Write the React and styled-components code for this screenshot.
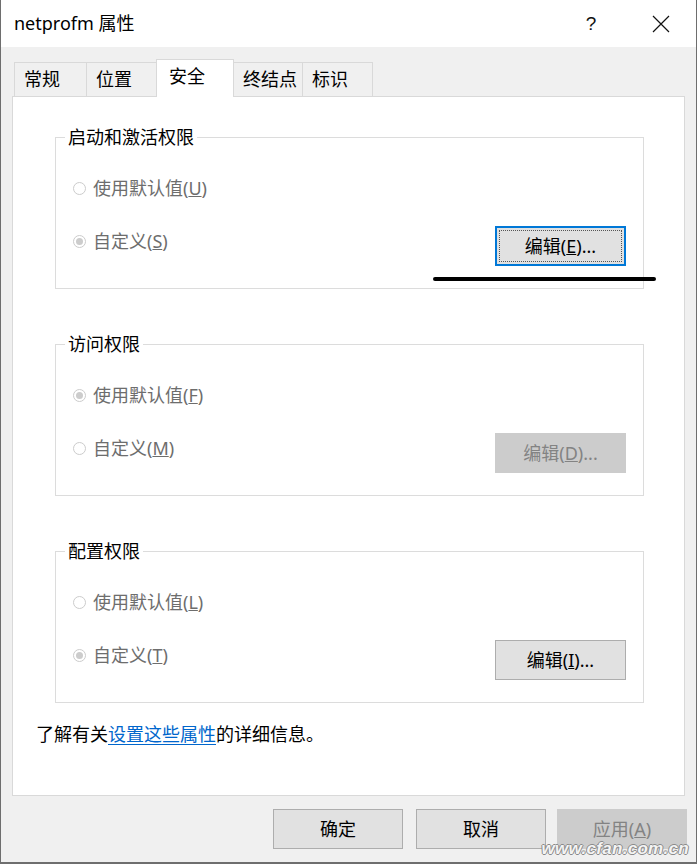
import React from 'react'
import styled, { createGlobalStyle } from 'styled-components'

const GlobalStyle = createGlobalStyle`
    html, body {
        margin: 0;
        padding: 0;
        background: #f0f0f0;
    }
    body {
        font-family: "Noto Sans", "Noto Sans CJK SC", sans-serif;
        font-size: 18px;
        color: #000;
    }
`

const Window = styled.div`
    position: relative;
    width: 697px;
    height: 864px;
    box-sizing: border-box;
    border-left: 1px solid #6e6e6e;
    border-right: 1px solid #6e6e6e;
    border-bottom: 2px solid #6e6e6e;
    background: #f0f0f0;
    display: flex;
    flex-direction: column;
    overflow: hidden;
`

const TitleBar = styled.div`
    height: 47px;
    flex-shrink: 0;
    background: #fff;
    display: flex;
    align-items: center;
    padding-left: 13px;
`
const Title = styled.div`
    flex: 1;
    font-size: 18px;
    line-height: 24px;
    margin-top: -1px;
`
const TitleButton = styled.div`
    width: 46px;
    height: 47px;
    display: flex;
    align-items: center;
    justify-content: center;
    font-size: 19px;
    color: #111;
`
const HelpButton = styled(TitleButton)`
    margin-right: 24px;
    font-family: "Liberation Sans", sans-serif;
    font-weight: 300;
`
const CloseButton = styled(TitleButton)`
    margin-right: 12px;
`

const Body = styled.div`
    flex: 1;
    display: flex;
    flex-direction: column;
    padding-top: 12px;
`

const TabRow = styled.div`
    height: 37px;
    display: flex;
    align-items: flex-end;
    margin-left: 13px;
`
const Tab = styled.div`
    position: relative;
    z-index: ${p => (p.$active ? 2 : 1)};
    box-sizing: border-box;
    width: ${p => p.$w}px;
    height: ${p => (p.$active ? 38 : 34)}px;
    margin-bottom: ${p => (p.$active ? -1 : 0)}px;
    margin-left: -1px;
    padding-left: ${p => (p.$active ? 12 : 9)}px;
    padding-top: 4px;
    border: 1px solid #d9d9d9;
    border-bottom: none;
    background: ${p => (p.$active ? '#fff' : '#f0f0f0')};
    font-size: 18px;
    line-height: 24px;
    &:first-child {
        margin-left: 0;
    }
`

const Panel = styled.div`
    flex: 1;
    margin: 0 11px;
    background: #fff;
    border: 1px solid #d9d9d9;
    padding: 28px 40px 0 23px;
    display: flex;
    flex-direction: column;
`

const GroupList = styled.div`
    display: flex;
    flex-direction: column;
    gap: 43px;
    margin-left: 19px;
`

const Group = styled.fieldset`
    margin: 0;
    padding: 27px 17px 22px 17px;
    border: 1px solid #dcdcdc;
    min-width: 0;
`
const Legend = styled.legend`
    margin-left: -8px;
    padding: 0 3px;
    font-size: 18px;
    line-height: 24px;
    color: #000;
`

const Row = styled.div`
    display: flex;
    align-items: flex-start;
    justify-content: space-between;
    margin-top: ${p => p.$top || 0}px;
`

const RadioLabel = styled.label`
    display: flex;
    align-items: center;
    height: 24px;
    margin-top: ${p => p.$offset || 0}px;
    color: #6d6d6d;
    font-size: 18px;
    line-height: 24px;
`
const Circle = styled.span`
    position: relative;
    width: 13px;
    height: 13px;
    box-sizing: border-box;
    border-radius: 50%;
    border: 1px solid #cccccc;
    background: #fff;
    margin-right: 7px;
    margin-top: 1px;
    &::after {
        content: '';
        display: ${p => (p.$checked ? 'block' : 'none')};
        position: absolute;
        left: 2px;
        top: 2px;
        width: 7px;
        height: 7px;
        border-radius: 50%;
        background: #cccccc;
    }
`

const Button = styled.div`
    position: relative;
    box-sizing: border-box;
    width: 131px;
    height: 40px;
    display: flex;
    align-items: center;
    justify-content: center;
    font-size: 18px;
    line-height: 24px;
    background: ${p => (p.$disabled ? '#cccccc' : '#e1e1e1')};
    color: ${p => (p.$disabled ? '#838383' : '#000')};
    border: ${p => (p.$focused ? '2px solid #0078d7' : p.$disabled ? '1px solid #cccccc' : '1px solid #adadad')};
    &::after {
        content: '';
        display: ${p => (p.$focused ? 'block' : 'none')};
        position: absolute;
        inset: 2px;
        border: 1px dotted #555;
    }
`
const DialogButton = styled(Button)`
    width: 130px;
    margin-left: ${p => p.$gap || 0}px;
`

const Info = styled.div`
    margin-top: 19px;
    font-size: 18px;
    line-height: 24px;
    color: #000;
`
const Link = styled.a`
    color: #0066cc;
    text-decoration: underline;
    text-underline-offset: 3px;
`

const Footer = styled.div`
    height: 66px;
    flex-shrink: 0;
    box-sizing: border-box;
    padding: 13px 9px 0 0;
    display: flex;
    justify-content: flex-end;
`

const Marker = styled.div`
    position: absolute;
    left: 432px;
    top: 277px;
    width: 223px;
    height: 4px;
    border-radius: 2px;
    background: #000;
`

const Watermark = styled.div`
    position: absolute;
    right: 7px;
    bottom: 3px;
    font-family: "Liberation Sans", sans-serif;
    font-style: italic;
    font-weight: bold;
    font-size: 17px;
    letter-spacing: 0.3px;
    color: #f4f4f4;
    text-shadow: 1px 0 #8a8a8a, -1px 0 #8a8a8a, 0 1px #8a8a8a, 0 -1px #8a8a8a;
`

const Radio = ({ checked, offset, children }) => (
    <RadioLabel $offset={offset}>
        <Circle $checked={checked} />
        <span>{children}</span>
    </RadioLabel>
)

const PermissionGroup = ({ title, first, second, defaultChecked, button }) => (
    <Group>
        <Legend>{title}</Legend>
        <Row>
            <Radio checked={defaultChecked}>{first}</Radio>
        </Row>
        <Row $top={26}>
            <Radio checked={!defaultChecked} offset={3}>{second}</Radio>
            {button}
        </Row>
    </Group>
)

const tabs = [
    { name: '常规', w: 73 },
    { name: '位置', w: 71 },
    { name: '安全', w: 78, active: true },
    { name: '终结点', w: 70 },
    { name: '标识', w: 71 },
]

export default function App() {
    return (
        <>
            <GlobalStyle />
            <Window>
                <TitleBar>
                    <Title>netprofm 属性</Title>
                    <HelpButton>?</HelpButton>
                    <CloseButton>
                        <svg width="18" height="18" viewBox="0 0 18 18">
                            <path d="M1 1 L17 17 M17 1 L1 17" stroke="#111" strokeWidth="1.2" fill="none" />
                        </svg>
                    </CloseButton>
                </TitleBar>
                <Body>
                    <TabRow>
                        {tabs.map(t => (
                            <Tab key={t.name} $w={t.w} $active={t.active}>{t.name}</Tab>
                        ))}
                    </TabRow>
                    <Panel>
                        <GroupList>
                            <PermissionGroup
                                title="启动和激活权限"
                                first={<>使用默认值(<u>U</u>)</>}
                                second={<>自定义(<u>S</u>)</>}
                                defaultChecked={false}
                                button={<Button $focused>编辑(<u>E</u>)...</Button>}
                            />
                            <PermissionGroup
                                title="访问权限"
                                first={<>使用默认值(<u>F</u>)</>}
                                second={<>自定义(<u>M</u>)</>}
                                defaultChecked={true}
                                button={<Button $disabled>编辑(<u>D</u>)...</Button>}
                            />
                            <PermissionGroup
                                title="配置权限"
                                first={<>使用默认值(<u>L</u>)</>}
                                second={<>自定义(<u>T</u>)</>}
                                defaultChecked={false}
                                button={<Button>编辑(<u>I</u>)...</Button>}
                            />
                        </GroupList>
                        <Info>
                            了解有关<Link href="#">设置这些属性</Link>的详细信息。
                        </Info>
                    </Panel>
                    <Footer>
                        <DialogButton>确定</DialogButton>
                        <DialogButton $gap={13}>取消</DialogButton>
                        <DialogButton $gap={11} $disabled>应用(<u>A</u>)</DialogButton>
                    </Footer>
                </Body>
                <Marker />
                <Watermark>www.cfan.com.cn</Watermark>
            </Window>
        </>
    )
}
